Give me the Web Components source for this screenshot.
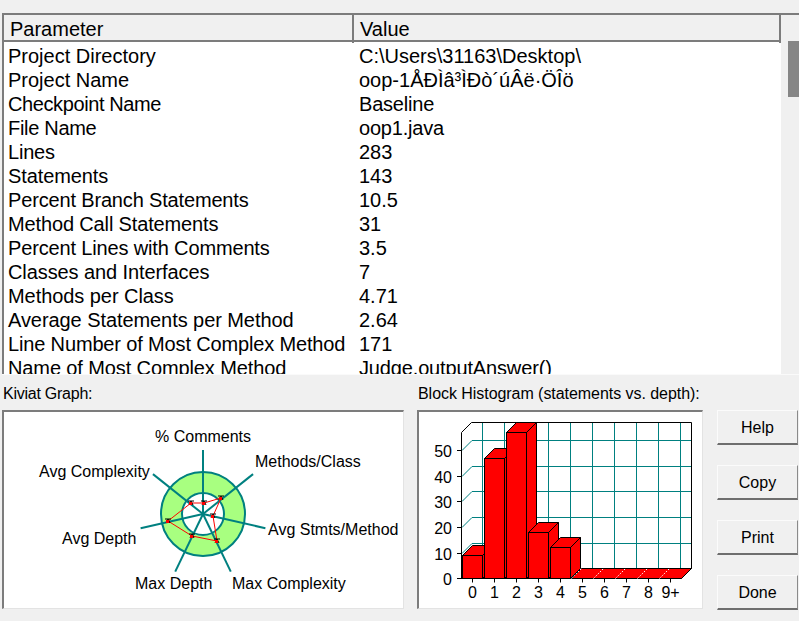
<!DOCTYPE html>
<html>
<head>
<meta charset="utf-8">
<style>
  html, body { margin: 0; height: 100%; background: #f0f0f0; }
  body { width: 799px; height: 621px; overflow: hidden; font: 16px/18px "Liberation Sans", Arial, sans-serif; color: #000; }
</style>
</head>
<body>
<metrics-dialog>
  <metrics-table slot="table">
    <metric-row><span slot="name">Project Directory</span>C:\Users\31163\Desktop\</metric-row>
    <metric-row><span slot="name">Project Name</span>oop-1ÅÐÌâ³ÌÐò´úÂë·ÖÎö</metric-row>
    <metric-row style="letter-spacing:-.2px"><span slot="name" style="letter-spacing:-.4px">Checkpoint Name</span>Baseline</metric-row>
    <metric-row style="letter-spacing:-.2px"><span slot="name" style="letter-spacing:-.3px">File Name</span>oop1.java</metric-row>
    <metric-row><span slot="name" style="letter-spacing:-.2px">Lines</span>283</metric-row>
    <metric-row><span slot="name" style="letter-spacing:-.1px">Statements</span>143</metric-row>
    <metric-row><span slot="name" style="letter-spacing:-.16px">Percent Branch Statements</span>10.5</metric-row>
    <metric-row><span slot="name" style="letter-spacing:-.14px">Method Call Statements</span>31</metric-row>
    <metric-row><span slot="name" style="letter-spacing:-.15px">Percent Lines with Comments</span>3.5</metric-row>
    <metric-row><span slot="name" style="letter-spacing:-.09px">Classes and Interfaces</span>7</metric-row>
    <metric-row><span slot="name" style="letter-spacing:-.06px">Methods per Class</span>4.71</metric-row>
    <metric-row><span slot="name" style="letter-spacing:-.07px">Average Statements per Method</span>2.64</metric-row>
    <metric-row><span slot="name" style="letter-spacing:-.15px">Line Number of Most Complex Method</span>171</metric-row>
    <metric-row style="letter-spacing:-.15px"><span slot="name" style="letter-spacing:-.11px">Name of Most Complex Method</span>Judge.outputAnswer()</metric-row>
  </metrics-table>
  <graph-panel slot="kiviat" label="Kiviat Graph:" style="letter-spacing:-.25px"><kiviat-graph></kiviat-graph></graph-panel>
  <graph-panel slot="histogram" label="Block Histogram (statements vs. depth):" style="letter-spacing:-.05px"><block-histogram></block-histogram></graph-panel>
  <dlg-button slot="buttons">Help</dlg-button>
  <dlg-button slot="buttons">Copy</dlg-button>
  <dlg-button slot="buttons">Print</dlg-button>
  <dlg-button slot="buttons">Done</dlg-button>
</metrics-dialog>

<script>
class MetricsDialog extends HTMLElement {
  constructor() {
    super();
    this.attachShadow({ mode: 'open' });
    this.shadowRoot.innerHTML = `
      <style>
        :host { display: block; padding-top: 13px; }
        .bottom { display: grid; grid-template-columns: 402px 286px 82px; column-gap: 13px; margin-left: 2px; }
        .buttons { display: flex; flex-direction: column; gap: 20px; padding-top: 35px; margin-left: 1px; }
      </style>
      <slot name="table"></slot>
      <div class="bottom">
        <slot name="kiviat"></slot>
        <slot name="histogram"></slot>
        <div class="buttons"><slot name="buttons"></slot></div>
      </div>
    `;
  }
}

class MetricsTable extends HTMLElement {
  constructor() {
    super();
    this.attachShadow({ mode: 'open' });
    this.shadowRoot.innerHTML = `
      <style>
        :host { display: grid; grid-template-columns: 1fr 18px; height: 362px; margin-left: 2px; font-size: 20px; line-height: 24px;
          border-top: 2px solid #7c7c7c; border-bottom: 1px solid #fafafa; box-sizing: border-box; }
        .list { border-left: 2px solid #7c7c7c; background: #fff; overflow: hidden; min-height: 0; }
        .head { display: grid; grid-template-columns: 350px 1fr; height: 25px; background: #f0f0f0; border-bottom: 2px solid #7c7c7c; }
        .head div { padding-left: 6px; line-height: 28px; border-right: 2px solid #7c7c7c; }
        .rows { padding-top: 2px; }
        .track { background: #f0f0f0; padding: 26px 0 0 7px; }
        .thumb { height: 56px; background: #868686; }
      </style>
      <div class="list">
        <div class="head"><div>Parameter</div><div>Value</div></div>
        <div class="rows"><slot></slot></div>
      </div>
      <div class="track"><div class="thumb"></div></div>
    `;
  }
}

class MetricRow extends HTMLElement {
  constructor() {
    super();
    this.attachShadow({ mode: 'open' });
    this.shadowRoot.innerHTML = `
      <style>
        :host { display: grid; grid-template-columns: 351px 1fr; height: 24px; white-space: nowrap; padding-left: 4px; }
      </style>
      <div><slot name="name"></slot></div>
      <div><slot></slot></div>
    `;
  }
}

class GraphPanel extends HTMLElement {
  constructor() {
    super();
    this.attachShadow({ mode: 'open' });
    this.shadowRoot.innerHTML = `
      <style>
        :host { display: block; }
        .label { height: 35px; padding: 10px 0 0 1px; box-sizing: border-box; white-space: nowrap; }
        .box { height: 199px; letter-spacing: 0; background: #fff; box-sizing: border-box; border-style: solid; border-color: #7c7c7c #e3e3e3 #e3e3e3 #7c7c7c; border-width: 2px 1px 1px 2px; }
      </style>
      <div class="label"></div>
      <div class="box"><slot></slot></div>
    `;
    this.shadowRoot.querySelector('.label').textContent = this.getAttribute('label');
  }
}

class KiviatGraph extends HTMLElement {
  constructor() {
    super();
    this.attachShadow({ mode: 'open' });
    const cx = 203, cy = 514, teal = '#008080';
    let spokes = '';
    for (let i = 0; i < 7; i++) {
      const a = i * 2 * Math.PI / 7;
      spokes += `<line x1="${cx}" y1="${cy}" x2="${cx + 64 * Math.sin(a)}" y2="${cy - 64 * Math.cos(a)}"/>`;
    }
    const pts = [[204, 503], [221, 498], [213, 516], [217, 541], [192, 536], [168, 521], [191, 503]];
    const marks = pts.map(p => `<path d="M${p[0] - 3} ${p[1] - 2}h6M${p[0] - 2} ${p[1] + 2}l2-4 2 4" stroke="#000" fill="none"/><rect x="${p[0] - 2}" y="${p[1] - 1}" width="3" height="3" fill="#f00"/>`).join('');
    const labels = [
      [155, 442, '% Comments'], [255, 467, 'Methods/Class'], [268, 535, 'Avg Stmts/Method'],
      [232, 589, 'Max Complexity'], [135, 589, 'Max Depth'], [62, 544, 'Avg Depth'], [39, 477, 'Avg Complexity']
    ].map(l => `<text x="${l[0]}" y="${l[1]}">${l[2]}</text>`).join('');
    this.shadowRoot.innerHTML = `
      <style>
        :host { display: block; }
        svg { display: block; }
        text { font: 16px "Liberation Sans", Arial, sans-serif; fill: #000; }
      </style>
      <svg width="399" height="196" viewBox="4 412 399 196">
        <circle cx="${cx}" cy="${cy}" r="32" fill="none" stroke="#a8ff80" stroke-width="21"/>
        <g stroke="${teal}" stroke-width="2" fill="none">
          <circle cx="${cx}" cy="${cy}" r="42"/>
          <circle cx="${cx}" cy="${cy}" r="21"/>
          ${spokes}
        </g>
        <polygon points="${pts.map(p => p.join(',')).join(' ')}" fill="none" stroke="#f00" stroke-width="1"/>
        ${marks}
        ${labels}
      </svg>
    `;
  }
}

class BlockHistogram extends HTMLElement {
  constructor() {
    super();
    this.attachShadow({ mode: 'open' });
    const x0 = 462, y0 = 579.5, back = 10, step = 22, perTen = 25.7;
    let grid = '', axis = '', bars = '', labels = '';
    // grid on the back wall and the side wall
    for (let i = 1; i <= 5; i++) {
      const y = Math.round(y0 - i * perTen) + 0.5;
      grid += `<path d="M${x0} ${y}l${back} ${-back}H${x0 + back + 220}"/>`;
      axis += `<path d="M${x0 - 5} ${y}h5"/>`;
      labels += `<text x="452" y="${y + 6}" text-anchor="end">${i * 10}</text>`;
    }
    for (let i = 0; i < 10; i++) {
      grid += `<path d="M${482.5 + i * step} 423.5V569.5"/>`;
    }
    labels += `<text x="452" y="${y0 + 6}" text-anchor="end">0</text>`;
    ['0', '1', '2', '3', '4', '5', '6', '7', '8', '9+'].forEach((t, i) => {
      const c = x0 + 10.5 + i * step;
      axis += `<path d="M${c} ${y0}v4"/>`;
      labels += `<text x="${c}" y="599" text-anchor="middle">${t}</text>`;
    });
    const tops = [556.5, 459.5, 433.5, 533.5, 548.5];
    tops.forEach((top, i) => {
      const x = x0 + 1 + i * step - 0.5, w = 20;
      bars += `<path d="M${x} ${top}l${back} ${-back}h${w}l${-back} ${back}z"/>`;
      bars += `<path d="M${x + w} ${top}l${back} ${-back}V${y0 - back}l${-back} ${back}z"/>`;
      bars += `<rect x="${x}" y="${top}" width="${w}" height="${y0 - top}"/>`;
    });
    let flats = '<path d="M571.5 579.5l10-10h110l-10 10z" fill="#f00" stroke="#000"/>';
    for (let i = 1; i <= 5; i++) {
      const x = 571.5 + (i - 1) * step;
      flats += `<path d="M${x} 579.5l10-10" stroke="#fff" stroke-dasharray="1.5 1.5"/>`;
    }
    this.shadowRoot.innerHTML = `
      <style>
        :host { display: block; }
        svg { display: block; }
        text { font: 16px "Liberation Sans", Arial, sans-serif; fill: #000; }
      </style>
      <svg width="283" height="196" viewBox="419 413 283 196">
        <g stroke="#008080" fill="none">${grid}</g>
        <g stroke="#000" fill="none">
          <path d="M${x0 - .5} 579V433.5l10-10H691.5V569.5l-10 10H${x0 - 5}"/>
          ${axis}
        </g>
        ${flats}
        <g fill="#f00" stroke="#000">${bars}</g>
        ${labels}
      </svg>
    `;
  }
}

class DlgButton extends HTMLElement {
  constructor() {
    super();
    this.attachShadow({ mode: 'open' });
    this.shadowRoot.innerHTML = `
      <style>
        :host { display: flex; align-items: center; justify-content: center; width: 81px; height: 35px; box-sizing: border-box; padding-top: 2px;
          background: #f0f0f0; border-style: solid; border-width: 1px 1px 2px 1px; border-color: #fbfbfb #8a8a8a #6e6e6e #fbfbfb; }
      </style>
      <slot></slot>
    `;
  }
}

customElements.define('metrics-dialog', MetricsDialog);
customElements.define('metrics-table', MetricsTable);
customElements.define('metric-row', MetricRow);
customElements.define('graph-panel', GraphPanel);
customElements.define('kiviat-graph', KiviatGraph);
customElements.define('block-histogram', BlockHistogram);
customElements.define('dlg-button', DlgButton);
</script>
</body>
</html>
